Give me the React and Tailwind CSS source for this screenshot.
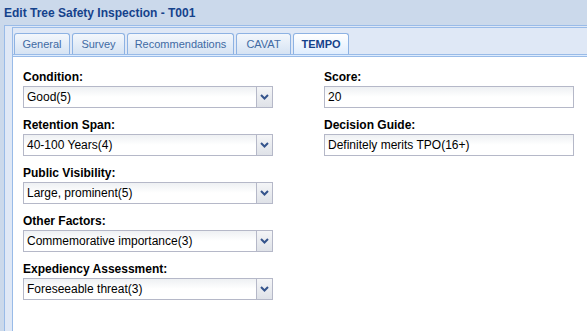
import React from "react";

const TABS = [
  { name: "General", w: 56 },
  { name: "Survey", w: 53 },
  { name: "Recommendations", w: 107 },
  { name: "CAVAT", w: 55 },
  { name: "TEMPO", w: 56, active: true },
];

const LEFT = [
  { label: "Condition:", value: "Good(5)" },
  { label: "Retention Span:", value: "40-100 Years(4)" },
  { label: "Public Visibility:", value: "Large, prominent(5)" },
  { label: "Other Factors:", value: "Commemorative importance(3)" },
  { label: "Expediency Assessment:", value: "Foreseeable threat(3)" },
];

const RIGHT = [
  { label: "Score:", value: "20" },
  { label: "Decision Guide:", value: "Definitely merits TPO(16+)" },
];

function Chevron() {
  return (
    <svg width="9" height="6" viewBox="0 0 9 6">
      <path d="M1 1 L4.5 4.5 L8 1" fill="none" stroke="#35548c" strokeWidth="2" />
    </svg>
  );
}

function Field({ label, value, combo }) {
  return (
    <div className="mb-[8px]">
      <div className="h-[18px] pt-[1px] text-[12px] font-bold leading-[16px] text-black">
        {label}
      </div>
      <div className="flex h-[22px] w-[250px] border border-[#b5b8c8] bg-gradient-to-b from-[#eef0f3] via-white to-white">
        <div className="flex flex-1 items-center pl-[3px] text-[12px] text-black">{value}</div>
        {combo && (
          <div className="flex w-[16px] items-center justify-center border-l border-[#b5b8c8] bg-gradient-to-b from-[#f4f5f7] to-[#dfe2e8]">
            <Chevron />
          </div>
        )}
      </div>
    </div>
  );
}

export default function App() {
  return (
    <div
      className="flex h-[331px] w-[587px] flex-col overflow-hidden bg-[#cbd9eb]"
      style={{ fontFamily: '"Liberation Sans", Arial, sans-serif' }}
    >
      {/* Window header */}
      <div className="flex h-[25px] items-center pl-[4px] text-[12px] font-bold text-[#15428b]">
        Edit Tree Safety Inspection - T001
      </div>

      <div className="ml-[4px] flex flex-1 border-l border-t border-[#99bbe8] bg-[#dfe8f6] pl-[7px] pt-[1px]">
        <div className="flex flex-1 flex-col border-l border-t border-[#99bbe8]">
          {/* Tab strip */}
          <div className="flex h-[26px] items-end gap-[2px] bg-[#dfe8f6] pl-[1px]">
            {TABS.map((t) =>
              t.active ? (
                <div
                  key={t.name}
                  className="-mb-[1px] flex h-[22px] items-center justify-center rounded-t-[3px] border border-b-0 border-[#8db2e3] bg-gradient-to-b from-white to-[#deecfd] text-[11px] font-bold text-[#15428b]"
                  style={{ width: t.w }}
                >
                  {t.name}
                </div>
              ) : (
                <div
                  key={t.name}
                  className="flex h-[21px] items-center justify-center rounded-t-[3px] border border-b-0 border-[#8db2e3] bg-gradient-to-b from-[#f3f7fc] to-[#d6e3f3] text-[11px] text-[#416aa3]"
                  style={{ width: t.w }}
                >
                  {t.name}
                </div>
              )
            )}
          </div>
          <div className="h-[3px] border-y border-[#99bbe8] bg-[#deecfd]" />

          {/* Form body */}
          <div className="flex flex-1 gap-[51px] bg-white pl-[10px] pt-[11px]">
            <div>
              {LEFT.map((f) => (
                <Field key={f.label} {...f} combo />
              ))}
            </div>
            <div>
              {RIGHT.map((f) => (
                <Field key={f.label} {...f} />
              ))}
            </div>
          </div>
        </div>
      </div>
    </div>
  );
}
